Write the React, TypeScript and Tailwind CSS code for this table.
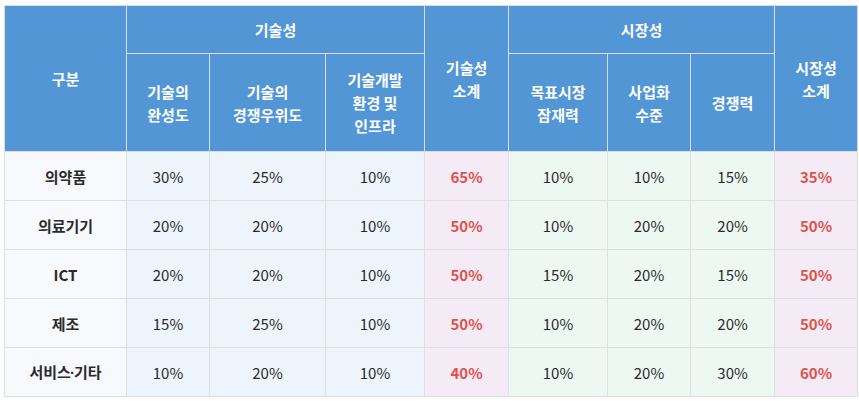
const rows = [
  { name: '의약품', tech: ['30%', '25%', '10%'], techSum: '65%', market: ['10%', '10%', '15%'], marketSum: '35%' },
  { name: '의료기기', tech: ['20%', '20%', '10%'], techSum: '50%', market: ['10%', '20%', '20%'], marketSum: '50%' },
  { name: 'ICT', tech: ['20%', '20%', '10%'], techSum: '50%', market: ['15%', '20%', '15%'], marketSum: '50%' },
  { name: '제조', tech: ['15%', '25%', '10%'], techSum: '50%', market: ['10%', '20%', '20%'], marketSum: '50%' },
  { name: '서비스·기타', tech: ['10%', '20%', '10%'], techSum: '40%', market: ['10%', '20%', '30%'], marketSum: '60%' },
];

const th = 'border border-[#d9dde3] bg-[#5296d5] text-white font-bold text-[15px] leading-[23px] text-center align-middle';
const td = 'border border-[#dcdfe3] text-center align-middle text-[15px] pt-[2px]';

function Name({ text }: { text: string }) {
  const parts = text.split('·');
  if (parts.length === 1) return <>{text}</>;
  return (
    <>
      {parts[0]}
      <span className="font-['Liberation_Sans'] mx-[-1px]">·</span>
      {parts[1]}
    </>
  );
}

export default function App() {
  return (
    <div className="min-h-screen bg-white pl-[4px] pt-[5px]" style={{ fontFamily: '"Noto Sans CJK KR", "Noto Sans", sans-serif' }}>
      <table className="w-[853px] border-collapse table-fixed border border-[#dcdfe3]">
        <colgroup>
          <col className="w-[122px]" />
          <col className="w-[83px]" />
          <col className="w-[116px]" />
          <col className="w-[99px]" />
          <col className="w-[84px]" />
          <col className="w-[99px]" />
          <col className="w-[83px]" />
          <col className="w-[84px]" />
          <col className="w-[83px]" />
        </colgroup>
        <thead>
          <tr className="h-[48px]">
            <th rowSpan={2} className={th}>구분</th>
            <th colSpan={3} className={th}>기술성</th>
            <th rowSpan={2} className={th}>기술성<br />소계</th>
            <th colSpan={3} className={th}>시장성</th>
            <th rowSpan={2} className={th}>시장성<br />소계</th>
          </tr>
          <tr className="h-[98px]">
            <th className={th}>기술의<br />완성도</th>
            <th className={th}>기술의<br />경쟁우위도</th>
            <th className={th}>기술개발<br />환경 및<br />인프라</th>
            <th className={th}>목표시장<br />잠재력</th>
            <th className={th}>사업화<br />수준</th>
            <th className={th}>경쟁력</th>
          </tr>
        </thead>
        <tbody>
          {rows.map((r) => (
            <tr key={r.name} className="h-[49px]">
              <td className={`${td} bg-[#f7f9fc] font-bold text-[#2b2b2b]`}><Name text={r.name} /></td>
              {r.tech.map((v, i) => (
                <td key={i} className={`${td} bg-[#edf4fb] text-[#2b2b2b]`}>{v}</td>
              ))}
              <td className={`${td} bg-[#f4ebf7] font-bold text-[#e0534a]`}>{r.techSum}</td>
              {r.market.map((v, i) => (
                <td key={i} className={`${td} bg-[#eef8f3] text-[#2b2b2b]`}>{v}</td>
              ))}
              <td className={`${td} bg-[#f4ebf7] font-bold text-[#e0534a]`}>{r.marketSum}</td>
            </tr>
          ))}
        </tbody>
      </table>
    </div>
  );
}
